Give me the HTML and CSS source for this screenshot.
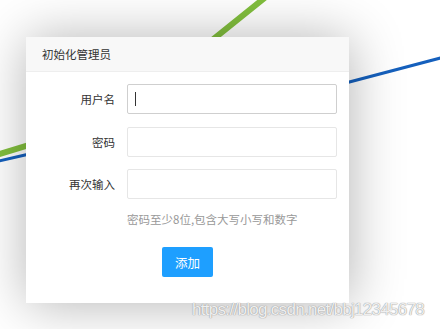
FILE: index.html
```html
<!DOCTYPE html>
<html lang="zh-CN">
<head>
  <meta charset="UTF-8" />
  <meta name="viewport" content="width=device-width, initial-scale=1.0"/>
  <title>初始化管理员</title>
  <link rel="stylesheet" href="styles.css">
</head>
<body>
  <div class="stage">
    <svg class="bg-lines" width="440" height="329" viewBox="0 0 440 329">
      <path d="M 267 -4 L 114 119 L -10 157" fill="none" stroke="#82bf3e" stroke-width="6"/>
      <path d="M 452 55 L 300 95 L 25 155 L -10 163" fill="none" stroke="#1560bd" stroke-width="3"/>
    </svg>

    <div class="dialog">
      <div class="dialog-title">初始化管理员</div>
      <form class="form">
        <div class="row">
          <label class="label">用户名</label>
          <div class="field">
            <input class="input input-active" type="text">
            <span class="caret"></span>
          </div>
        </div>
        <div class="row">
          <label class="label">密码</label>
          <div class="field"><input class="input" type="password"></div>
        </div>
        <div class="row">
          <label class="label">再次输入</label>
          <div class="field"><input class="input" type="password"></div>
        </div>
        <div class="hint">密码至少8位,包含大写小写和数字</div>
        <div class="actions">
          <button type="button" class="btn">添加</button>
        </div>
      </form>
    </div>

    <div class="watermark">https://blog.csdn.net/bbj12345678</div>
  </div>
</body>
</html>
```

FILE: styles.css
```css
body {
  margin: 0;
  background: #fff;
  font-family: "Noto Sans CJK SC", "Liberation Sans", sans-serif;
  color: #333;
}
.stage {
  position: relative;
  width: 440px;
  height: 329px;
  overflow: hidden;
  padding-top: 37px;
  box-sizing: border-box;
}
.bg-lines {
  position: absolute;
  left: 0;
  top: 0;
}
.dialog {
  position: relative;
  margin-left: 26px;
  width: 323px;
  height: 266px;
  background: #fff;
  box-shadow: 1px 1px 50px rgba(0,0,0,0.3);
}
.dialog-title {
  height: 34px;
  line-height: 34px;
  padding: 0 16px;
  background: #f8f8f8;
  border-bottom: 1px solid #eee;
  font-size: 11.5px;
  color: #333;
}
.form {
  margin: 0;
  padding-top: 12px;
}
.row {
  display: grid;
  grid-template-columns: 89px 210px;
  column-gap: 12px;
  align-items: center;
  margin-bottom: 12px;
}
.row:first-child {
  margin-bottom: 13px;
}
.label {
  text-align: right;
  font-size: 11.5px;
  color: #333;
}
.field {
  position: relative;
}
.input {
  display: block;
  width: 210px;
  height: 30px;
  box-sizing: border-box;
  border: 1px solid #e6e6e6;
  border-radius: 2px;
  background: #fff;
  padding: 0 8px;
  outline: none;
}
.input-active {
  border-color: #cfcfcf;
}
.caret {
  position: absolute;
  left: 8px;
  top: 8px;
  width: 1px;
  height: 14px;
  background: #333;
}
.hint {
  margin: 8px 0 0 101px;
  line-height: 16px;
  font-size: 11.5px;
  color: #999;
}
.actions {
  margin: 20px 0 0 136px;
}
.btn {
  width: 51px;
  height: 30px;
  border: none;
  border-radius: 2px;
  background: #1e9fff;
  color: #fff;
  font-family: inherit;
  font-size: 12.5px;
  cursor: pointer;
}
.watermark {
  position: absolute;
  left: 192px;
  top: 300px;
  font-family: "Liberation Sans", sans-serif;
  font-size: 17px;
  letter-spacing: -0.7px;
  color: rgba(255,255,255,0.85);
  text-shadow: 0 0 1px #999, 0 0 1px #999;
  white-space: nowrap;
}
```
